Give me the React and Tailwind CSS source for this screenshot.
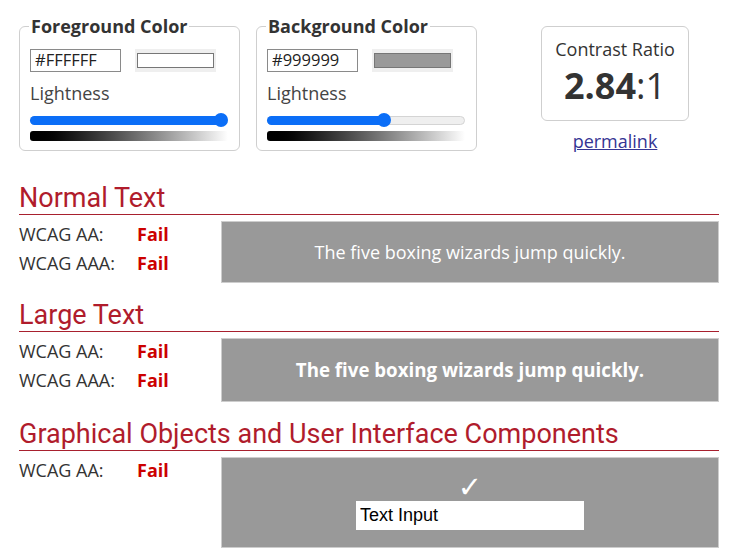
import { useState } from 'react'

const FONT = { fontFamily: '"Open Sans", "Liberation Sans", sans-serif' }
const HEAD = { fontFamily: 'Roboto, "Liberation Sans", sans-serif' }

function Slider({ value }) {
  return (
    <div className="relative h-[14px] flex items-center">
      <div className="w-full h-[9px] rounded-full bg-[#efefef] border border-[#d4d4d4]" />
      <div
        className="absolute left-0 h-[9px] rounded-full bg-[#0b6ef7]"
        style={{ width: `calc((100% - 14px) * ${value / 100} + 7px)` }}
      />
      <div
        className="absolute w-[14px] h-[14px] rounded-full bg-[#0b6ef7]"
        style={{ left: `calc((100% - 14px) * ${value / 100})` }}
      />
    </div>
  )
}

function ColorPicker({ title, hex, swatch, lightness }) {
  return (
    <div className="relative w-[221px] h-[125px] border border-[#cfcfcf] rounded-[6px] pl-[10px] pr-[11px] pt-[22px]">
      {/* legend sits on the top border */}
      <span className="absolute left-[9px] -top-[13px] px-[2px] bg-white text-[18px] leading-[24px] font-bold text-[#333]">
        {title}
      </span>
      <div className="flex items-center gap-[14px]">
        <input
          readOnly
          value={hex}
          className="w-[91px] h-[23px] border border-[#8a8a8a] px-[4px] text-[16.5px] text-[#222] outline-none"
          style={FONT}
        />
        <div className="w-[81px] h-[23px] bg-[#efefef] px-[2px] py-[4px]">
          <div className="w-full h-full border border-[#767676]" style={{ backgroundColor: swatch }} />
        </div>
      </div>
      <div className="mt-[9px] text-[18px] leading-[24px] text-[#444]">Lightness</div>
      <div className="mt-[8px]">
        <Slider value={lightness} />
        <div className="mt-[4px] h-[10px] rounded-[3px] bg-linear-to-r from-black to-white" />
      </div>
    </div>
  )
}

function Results({ rows }) {
  return (
    <div className="w-[202px] shrink-0 -mt-[1px]">
      {rows.map((r) => (
        <div key={r} className="flex h-[29px] items-center text-[18px] text-[#333]">
          <span className="w-[118px]">{r}</span>
          <span className="font-bold text-[#cc0000]">Fail</span>
        </div>
      ))}
    </div>
  )
}

function Section({ title, children, className = '' }) {
  return (
    <section className={className}>
      <h2
        className="text-[27px] leading-[30px] text-[#b01c2c] pb-[1px] border-b border-[#a8202e]"
        style={HEAD}
      >
        {title}
      </h2>
      <div className="flex mt-[6px]">{children}</div>
    </section>
  )
}

export default function App() {
  const [fg] = useState('#FFFFFF')
  const [bg] = useState('#999999')

  return (
    <div className="w-[729px] h-[556px] overflow-hidden bg-white pl-[19px] pr-[10px] pt-[26px]" style={FONT}>
      {/* Pickers and ratio */}
      <div className="flex items-start">
        <ColorPicker title="Foreground Color" hex={fg} swatch="#ffffff" lightness={100} />
        <div className="ml-[16px]">
          <ColorPicker title="Background Color" hex={bg} swatch="#999999" lightness={60} />
        </div>
        <div className="ml-[64px] w-[148px] flex flex-col items-center">
          <div className="w-full h-[95px] border border-[#cfcfcf] rounded-[6px] pt-[10px] text-center text-[#333]">
            <div className="text-[18px] leading-[24px]">Contrast Ratio</div>
            <div className="mt-[3px] text-[36px] leading-[44px]">
              <span className="font-bold">2.84</span>:1
            </div>
          </div>
          <a href="#" className="mt-[8px] text-[18px] leading-[24px] text-[#353593] underline">permalink</a>
        </div>
      </div>

      {/* Normal text */}
      <Section title="Normal Text" className="mt-[30px]">
        <Results rows={['WCAG AA:', 'WCAG AAA:']} />
        <div className="flex-1 h-[62px] bg-[#999999] border border-[#cdcdcd] flex items-center justify-center text-white text-[18px]">
          The five boxing wizards jump quickly.
        </div>
      </Section>

      {/* Large text */}
      <Section title="Large Text" className="mt-[17px]">
        <Results rows={['WCAG AA:', 'WCAG AAA:']} />
        <div className="flex-1 h-[64px] bg-[#999999] border border-[#cdcdcd] flex items-center justify-center text-white text-[18.7px] font-bold">
          The five boxing wizards jump quickly.
        </div>
      </Section>

      {/* Graphical objects */}
      <Section title="Graphical Objects and User Interface Components" className="mt-[17px]">
        <Results rows={['WCAG AA:']} />
        <div className="flex-1 h-[91px] bg-[#999999] border border-[#cdcdcd] flex flex-col items-center pt-[15px]">
          <span className="text-white text-[29px] leading-[28px]" style={{ fontFamily: '"DejaVu Sans", sans-serif' }}>✓</span>
          <input
            readOnly
            value="Text Input"
            className="w-[228px] h-[29px] bg-white px-[4px] text-[18px] text-black outline-none"
            style={{ fontFamily: '"Liberation Sans", Arial, sans-serif' }}
          />
        </div>
      </Section>
    </div>
  )
}
